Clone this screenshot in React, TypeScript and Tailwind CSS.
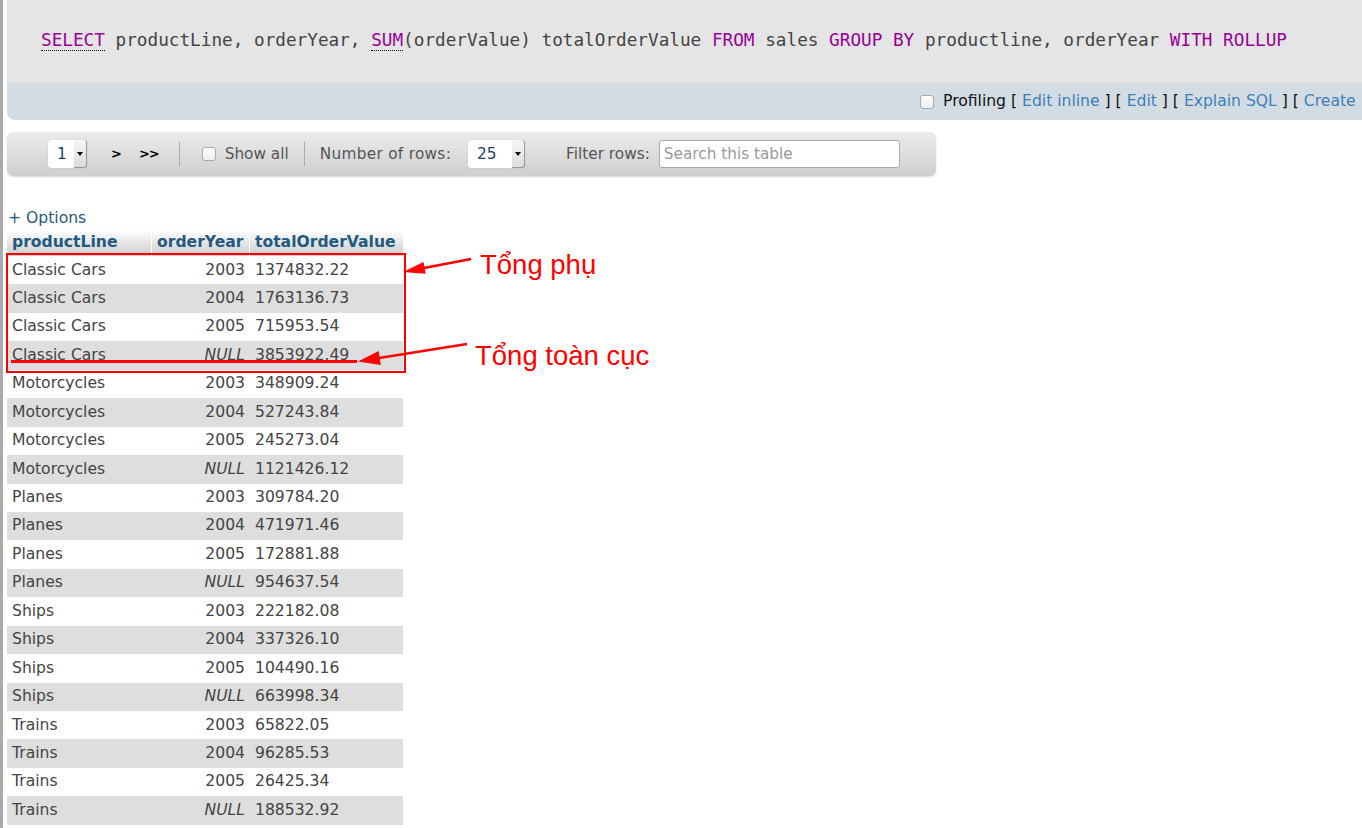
const rows: [string, string, string][] = [
  ['Classic Cars', '2003', '1374832.22'],
  ['Classic Cars', '2004', '1763136.73'],
  ['Classic Cars', '2005', '715953.54'],
  ['Classic Cars', 'NULL', '3853922.49'],
  ['Motorcycles', '2003', '348909.24'],
  ['Motorcycles', '2004', '527243.84'],
  ['Motorcycles', '2005', '245273.04'],
  ['Motorcycles', 'NULL', '1121426.12'],
  ['Planes', '2003', '309784.20'],
  ['Planes', '2004', '471971.46'],
  ['Planes', '2005', '172881.88'],
  ['Planes', 'NULL', '954637.54'],
  ['Ships', '2003', '222182.08'],
  ['Ships', '2004', '337326.10'],
  ['Ships', '2005', '104490.16'],
  ['Ships', 'NULL', '663998.34'],
  ['Trains', '2003', '65822.05'],
  ['Trains', '2004', '96285.53'],
  ['Trains', '2005', '26425.34'],
  ['Trains', 'NULL', '188532.92'],
]

export default function App() {
  return (
    <main className="relative flex min-h-screen w-full overflow-hidden bg-white font-['DejaVu_Sans',sans-serif] text-[15.6px] text-[#444]">
      {/* left frame edge */}
      <div className="w-[3px] shrink-0 bg-[#aaa]" />

      <div className="ml-[4px] flex-1 min-w-0">
        {/* SQL query box */}
        <div className="rounded-bl-[8px] overflow-hidden">
          <div className="h-[83px] bg-[#e5e5e5] pl-[34px] pt-[30px] whitespace-nowrap font-['DejaVu_Sans_Mono',monospace] text-[17.7px] leading-[20px] text-[#444]">
            <Kw dotted>SELECT</Kw> productLine, orderYear, <Kw dotted>SUM</Kw>(orderValue) totalOrderValue <Kw>FROM</Kw> sales <Kw>GROUP BY</Kw> productline, orderYear <Kw>WITH ROLLUP</Kw>
          </div>
          <div className="h-[37px] bg-[#d4dce3] pl-[913px] flex items-center whitespace-nowrap text-[#111]">
            <Checkbox />
            <span className="ml-[9px]">Profiling</span>
            <span className="ml-[5px]">[ <a className="text-[#3a7fbd]">Edit inline</a> ] [ <a className="text-[#3a7fbd]">Edit</a> ] [ <a className="text-[#3a7fbd]">Explain SQL</a> ] [ <a className="text-[#3a7fbd]">Create</a></span>
          </div>
        </div>

        {/* navigation toolbar */}
        <div className="mt-[12px] w-[929px] h-[44px] rounded-[6px] bg-gradient-to-b from-[#ececec] to-[#cfcfcf] shadow-[0_1px_2px_rgba(0,0,0,0.15)] flex items-center whitespace-nowrap text-[15.3px] text-[#555]">
          <FakeSelect value="1" className="ml-[41px] w-[39px]" />
          <span className="ml-[24px] text-[13px] font-bold text-black">&gt;</span>
          <span className="ml-[17px] text-[13px] font-bold text-black tracking-[-1px]">&gt;&gt;</span>
          <span className="ml-[20px] h-[24px] w-px bg-[#aaa]" />
          <span className="ml-[22px] flex"><Checkbox /></span>
          <span className="ml-[9px]">Show all</span>
          <span className="ml-[15px] h-[24px] w-px bg-[#aaa]" />
          <span className="ml-[15px] tracking-[0.3px]">Number of rows:</span>
          <FakeSelect value="25" className="ml-[17px] w-[57px]" />
          <span className="ml-[41px]">Filter rows:</span>
          <div className="ml-[9px] w-[241px] h-[28px] rounded-[3px] border border-[#aaa] bg-white flex items-center pl-[4px] text-[#999]">
            Search this table
          </div>
        </div>

        {/* options */}
        <div className="mt-[33px] h-[19px] leading-[19px] pl-[1px] text-[#235a81]">+ Options</div>

        {/* result table */}
        <div className="mt-[2px] w-[396px]">
          <div className="grid grid-cols-[145px_98px_153px] h-[26px] font-bold text-[#235a81]">
            <div className="bg-gradient-to-b from-white to-[#ccc] border-r border-white pl-[5px] flex items-center">productLine</div>
            <div className="bg-gradient-to-b from-white to-[#ccc] border-r border-white pl-[5px] flex items-center">orderYear</div>
            <div className="bg-gradient-to-b from-white to-[#ccc] pl-[5px] flex items-center">totalOrderValue</div>
          </div>
          {rows.map(([line, year, total], i) => (
            <div key={i} className={`grid grid-cols-[145px_98px_153px] h-[28.45px] items-center ${i % 2 ? 'bg-[#dedede]' : 'bg-white'}`}>
              <div className="pl-[5px]">{line}</div>
              <div className={`pr-[5px] text-right ${year === 'NULL' ? 'italic' : ''}`}>{year}</div>
              <div className="pl-[5px]">{total}</div>
            </div>
          ))}
        </div>
      </div>

      {/* red annotations drawn over the table */}
      <svg className="absolute left-0 top-0 pointer-events-none" width="1362" height="828">
        <rect x="7" y="254" width="398" height="118" fill="none" stroke="#f00" strokeWidth="2" />
        <line x1="471" y1="259" x2="424" y2="268" stroke="#f00" strokeWidth="2.5" />
        <polygon points="403,272 425.7,273.8 423.5,262" fill="#f00" />
        <line x1="467" y1="344" x2="379" y2="358" stroke="#f00" strokeWidth="2.5" />
        <polygon points="358,361.5 380.8,364.9 378.6,351.1" fill="#f00" />
        <rect x="11" y="360" width="346" height="3" fill="#f00" />
      </svg>
      <span className="absolute left-[480px] top-[251px] leading-none text-[27.5px] text-[#f00] font-['Liberation_Sans',sans-serif] whitespace-nowrap">Tổng phụ</span>
      <span className="absolute left-[475px] top-[342px] leading-none text-[27.5px] text-[#f00] font-['Liberation_Sans',sans-serif] whitespace-nowrap">Tổng toàn cục</span>
    </main>
  )
}

function Kw({ children, dotted }: { children: React.ReactNode; dotted?: boolean }) {
  return (
    <span className={`text-[#990099] ${dotted ? 'border-b border-dotted border-black' : ''}`}>{children}</span>
  )
}

function Checkbox() {
  return <span className="inline-block shrink-0 w-[14px] h-[14px] rounded-[3px] border border-[#aaa] bg-gradient-to-b from-white to-[#eee] align-middle" />
}

function FakeSelect({ value, className }: { value: string; className: string }) {
  return (
    <div className={`h-[28px] shrink-0 rounded-[3px] bg-white flex shadow-[0_0_1px_rgba(0,0,0,0.3)] ${className}`}>
      <span className="flex-1 pl-[9px] flex items-center text-[#1d3d6b]">{value}</span>
      <span className="w-[13px] bg-gradient-to-b from-[#f6f6f6] to-[#dcdcdc] border-r border-b border-[#999] rounded-r-[3px] flex items-center justify-center">
        <span className="w-0 h-0 border-l-[3px] border-r-[3px] border-t-[4px] border-l-transparent border-r-transparent border-t-black" />
      </span>
    </div>
  )
}
